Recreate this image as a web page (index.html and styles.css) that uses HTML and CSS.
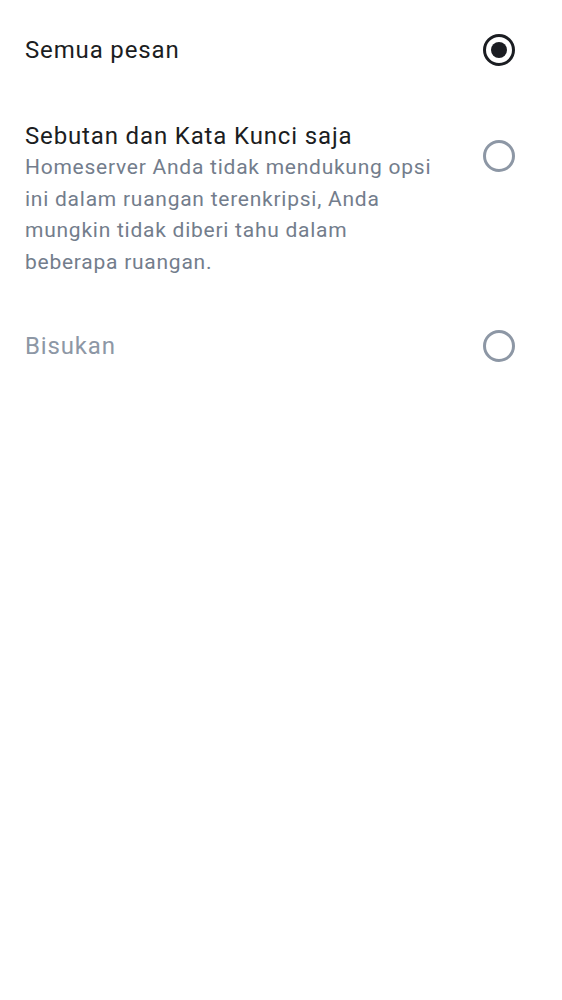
FILE: index.html
```html
<!DOCTYPE html>
<html lang="id">
<head>
<meta charset="utf-8">
<link rel="stylesheet" href="styles.css">
</head>
<body>
<div class="list">
  <div class="row">
    <div class="text"><div class="title">Semua pesan</div></div>
    <div class="radio checked"><span class="dot"></span></div>
  </div>
  <div class="row top">
    <div class="text">
      <div class="title">Sebutan dan Kata Kunci saja</div>
      <div class="desc">Homeserver Anda tidak mendukung opsi ini dalam ruangan terenkripsi, Anda mungkin tidak diberi tahu dalam beberapa ruangan.</div>
    </div>
    <div class="radio offset"></div>
  </div>
  <div class="row">
    <div class="text"><div class="title muted">Bisukan</div></div>
    <div class="radio"></div>
  </div>
</div>
</body>
</html>
```

FILE: styles.css
```css
html, body {
  margin: 0;
  padding: 0;
  background: #ffffff;
}
body {
  font-family: Roboto, "Noto Sans", sans-serif;
  width: 562px;
}
.list {
  padding-top: 7px;
  display: flex;
  flex-direction: column;
}
.row {
  display: flex;
  align-items: center;
  padding: 27px 47px 27px 25px;
  gap: 44px;
}
.row.top {
  align-items: flex-start;
  padding-bottom: 25px;
}
.text {
  flex: 1;
  min-width: 0;
}
.title {
  font-size: 24px;
  line-height: 32px;
  color: #1b1d22;
  letter-spacing: 0.85px;
}
.title.muted {
  color: #8d97a5;
}
.desc {
  font-size: 21px;
  line-height: 31.5px;
  color: #737d8c;
  letter-spacing: 0.75px;
}
.radio {
  width: 32px;
  height: 32px;
  box-sizing: border-box;
  border-radius: 50%;
  border: 3px solid #8d97a5;
  display: flex;
  align-items: center;
  justify-content: center;
  flex-shrink: 0;
}
.radio.checked {
  border-color: #1b1d22;
}
.radio .dot {
  width: 16px;
  height: 16px;
  border-radius: 50%;
  background: #1b1d22;
}
.radio.offset {
  margin-top: 20px;
}
```
